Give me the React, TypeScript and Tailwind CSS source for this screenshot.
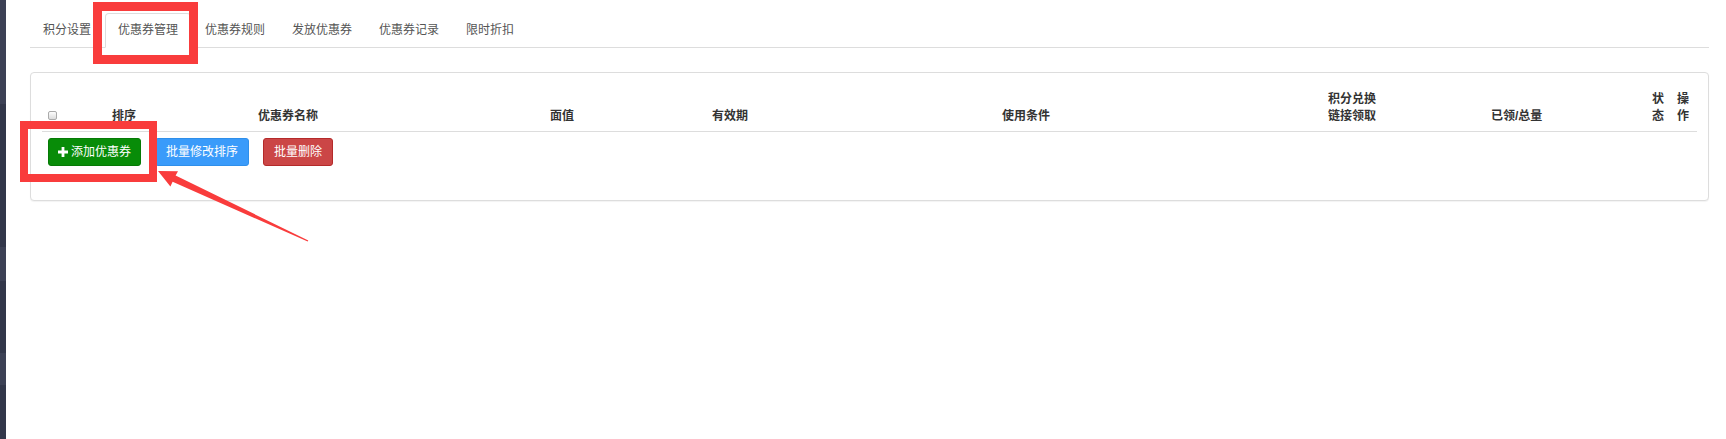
const tabs = ['积分设置', '优惠券管理', '优惠券规则', '发放优惠券', '优惠券记录', '限时折扣'];
const activeTab = 1;

const sidebarBands = [
  { h: 'h-[104px]', c: 'bg-[#3c4155]' },
  { h: 'h-[143px]', c: 'bg-[#32374a]' },
  { h: 'h-[34px]', c: 'bg-[#3c4155]' },
  { h: 'h-[72px]', c: 'bg-[#32374a]' },
  { h: 'h-[32px]', c: 'bg-[#3c4155]' },
];

function PlusIcon() {
  return (
    <svg width="10" height="10" viewBox="0 0 10 10" className="shrink-0">
      <path d="M3.6 0h2.8v3.6H10v2.8H6.4V10H3.6V6.4H0V3.6h3.6z" fill="#fff" />
    </svg>
  );
}

function Arrow() {
  return (
    <svg className="pointer-events-none absolute left-0 top-0" width="1726" height="439" viewBox="0 0 1726 439">
      <polygon
        points="158,171 178,171.2 175.6,175.6 308.3,240.4 307.7,241.6 172.6,181.8 170.4,186.4"
        fill="#f93c3c"
      />
    </svg>
  );
}

export default function App() {
  return (
    <div className="relative flex min-h-screen bg-white font-['Liberation_Sans','Noto_Sans_CJK_SC',sans-serif] text-[12px] leading-[17px] text-[#333]">
      <aside className="flex w-[6px] shrink-0 flex-col bg-[#32374a]">
        {sidebarBands.map((band, i) => (
          <div key={i} className={`${band.h} ${band.c}`} />
        ))}
      </aside>

      <main className="flex-1 pl-[24px] pr-[17px]">
        {/* tabs */}
        <ul className="flex border-b border-[#ddd] pt-[13px]">
          {tabs.map((tab, i) => (
            <li key={tab} className="-mb-px mr-[1px]">
              <a
                className={
                  i === activeTab
                    ? 'block rounded-t-[4px] border border-[#ddd] border-b-white bg-white px-[12px] py-[8px] text-[#555]'
                    : 'block rounded-t-[4px] border border-transparent px-[12px] py-[8px] text-[#555]'
                }
              >
                {tab}
              </a>
            </li>
          ))}
        </ul>

        {/* panel */}
        <section className="mt-[24px] rounded-[4px] border border-[#ddd] bg-white px-[11px] pb-[34px] pt-[18px] shadow-[0_1px_1px_rgba(0,0,0,0.05)]">
          <div className="grid grid-cols-[70px_146px_292px_162px_290px_1fr_163px_161px_25px_20px] items-end border-b border-[#ddd] pb-[6px] font-bold text-[#333]">
            <div className="pb-[5px] pl-[6px]">
              <span className="block h-[9px] w-[9px] rounded-[2px] border border-[#aaa] bg-gradient-to-b from-[#fdfdfd] to-[#dcdcdc]" />
            </div>
            <div>排序</div>
            <div>优惠券名称</div>
            <div>面值</div>
            <div>有效期</div>
            <div>使用条件</div>
            <div>
              积分兑换
              <br />
              链接领取
            </div>
            <div>已领/总量</div>
            <div>
              状
              <br />
              态
            </div>
            <div>
              操
              <br />
              作
            </div>
          </div>

          <div className="flex gap-[14px] pl-[6px] pt-[6px] text-white">
            <button className="flex h-[28px] items-center gap-[3px] rounded-[3px] border border-[#067a06] bg-[#088c08] px-[9px]">
              <PlusIcon />
              <span>添加优惠券</span>
            </button>
            <button className="h-[28px] rounded-[3px] border border-[#2f8fea] bg-[#3a9bfa] px-[10px]">批量修改排序</button>
            <button className="h-[28px] rounded-[3px] border border-[#b42a2a] bg-[#cb4646] px-[10px]">批量删除</button>
          </div>
        </section>
      </main>

      {/* annotation overlays */}
      <div className="pointer-events-none absolute left-[93px] top-[2px] h-[62px] w-[105px] border-[9px] border-[#f93c3c]" />
      <div className="pointer-events-none absolute left-[20px] top-[121px] h-[61px] w-[137px] border-[8px] border-[#f93c3c]" />
      <Arrow />
    </div>
  );
}
